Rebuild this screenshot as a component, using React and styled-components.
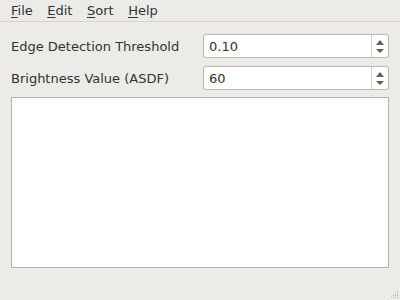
import React from "react";
import styled, { createGlobalStyle } from "styled-components";

const Global = createGlobalStyle`
  html, body { margin: 0; padding: 0; }
  body {
    width: 400px;
    height: 300px;
    overflow: hidden;
    background: #edebe7;
    font-family: "DejaVu Sans", sans-serif;
    font-size: 13px;
    color: #2e3436;
  }
`;

const Window = styled.div`
  width: 400px;
  height: 300px;
  display: flex;
  flex-direction: column;
  position: relative;
`;

const MenuBar = styled.div`
  display: flex;
  height: 21px;
  padding-left: 4px;
  border-bottom: 1px solid #d6d2cc;
  align-items: center;
`;

const MenuItem = styled.span`
  padding: 0 7px;
  margin-right: 0.5px;
  line-height: 20px;
`;

const Mnemonic = styled.span`
  text-decoration: underline;
  text-underline-offset: 2px;
`;

const Body = styled.div`
  flex: 1;
  display: flex;
  flex-direction: column;
  padding: 12px 11px 32px 11px;
  gap: 8px;
`;

const Row = styled.div`
  display: flex;
  align-items: center;
  justify-content: space-between;
  height: 24px;
`;

const Label = styled.span``;

const Spin = styled.div`
  width: 186px;
  height: 24px;
  display: flex;
  background: #fff;
  border: 1px solid #b8b4ae;
  border-radius: 3px;
  box-sizing: border-box;
`;

const SpinText = styled.div`
  flex: 1;
  padding-left: 5px;
  display: flex;
  align-items: center;
`;

const SpinButtons = styled.div`
  width: 16px;
  border-left: 1px solid #d3cfc9;
  display: flex;
  flex-direction: column;
  align-items: center;
  justify-content: center;
  gap: 4px;
`;

const Arrow = styled.div`
  width: 0;
  height: 0;
  border-left: 4px solid transparent;
  border-right: 4px solid transparent;
  ${(p) =>
    p.$up
      ? "border-bottom: 5px solid #5d5f5b;"
      : "border-top: 4px solid #5d5f5b;"}
`;

const TextArea = styled.div`
  flex: 1;
  background: #fff;
  border: 1px solid #b6b2ac;
  margin-top: -1px;
`;

const Grip = styled.svg`
  position: absolute;
  right: 1px;
  bottom: 1px;
`;

function SpinBox({ value }) {
  return (
    <Spin>
      <SpinText>{value}</SpinText>
      <SpinButtons>
        <Arrow $up />
        <Arrow />
      </SpinButtons>
    </Spin>
  );
}

export default function App() {
  const dots = [
    [8, 0],
    [6, 2], [8, 2],
    [4, 4], [6, 4], [8, 4],
    [2, 6], [4, 6], [6, 6], [8, 6],
  ];
  return (
    <Window>
      <Global />
      <MenuBar>
        <MenuItem><Mnemonic>F</Mnemonic>ile</MenuItem>
        <MenuItem><Mnemonic>E</Mnemonic>dit</MenuItem>
        <MenuItem><Mnemonic>S</Mnemonic>ort</MenuItem>
        <MenuItem><Mnemonic>H</Mnemonic>elp</MenuItem>
      </MenuBar>
      <Body>
        <Row>
          <Label>Edge Detection Threshold</Label>
          <SpinBox value="0.10" />
        </Row>
        <Row>
          <Label>Brightness Value (ASDF)</Label>
          <SpinBox value="60" />
        </Row>
        <TextArea />
      </Body>
      <Grip width="10" height="8" viewBox="0 0 10 8">
        {dots.map(([x, y], i) => (
          <rect key={i} x={x} y={y} width="1" height="1" fill="#b5b1ab" />
        ))}
      </Grip>
    </Window>
  );
}
